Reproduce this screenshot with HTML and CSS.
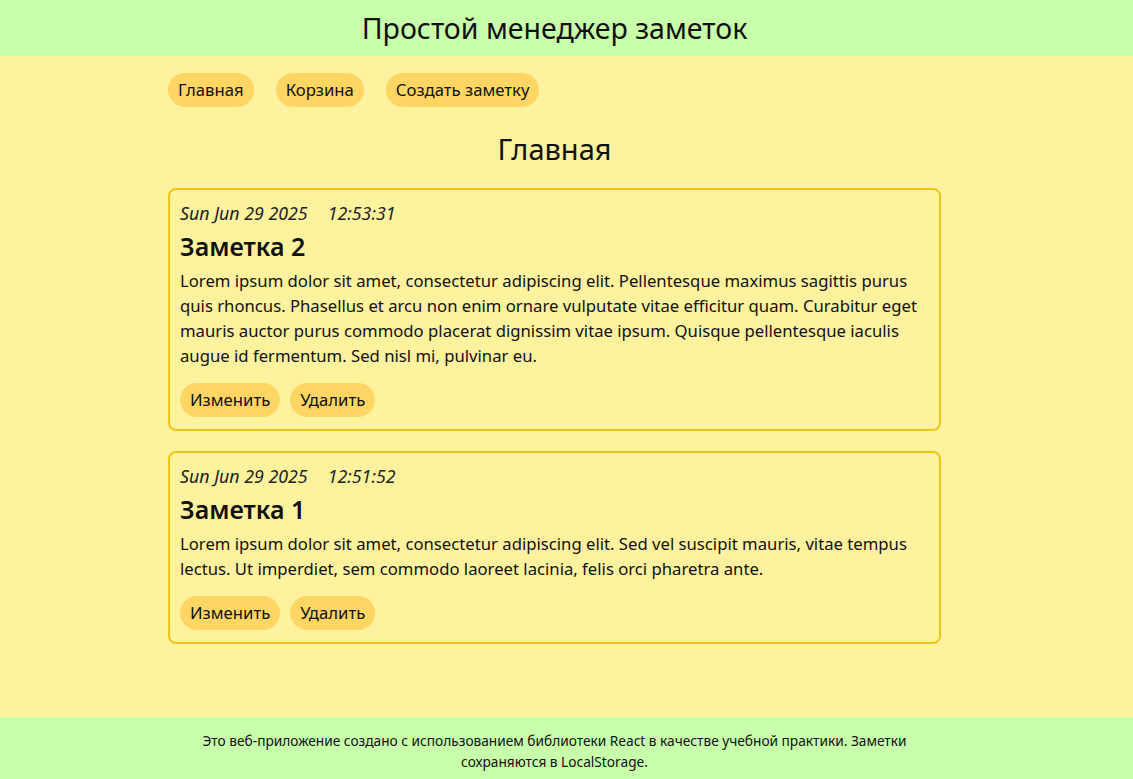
FILE: index.html
```html
<!DOCTYPE html>
<html lang="ru">
<head>
<meta charset="utf-8">
<title>Простой менеджер заметок</title>
<link rel="stylesheet" href="styles.css">
</head>
<body>
<div class="page">
  <header class="header">
    <h1 class="header-title">Простой менеджер заметок</h1>
  </header>
  <main class="main">
    <div class="wrap">
      <nav class="nav">
        <button class="pill">Главная</button>
        <button class="pill">Корзина</button>
        <button class="pill">Создать заметку</button>
      </nav>
      <h2 class="page-title">Главная</h2>
      <div class="notes">
        <article class="note">
          <div class="note-date"><span>Sun Jun 29 2025</span><span>12:53:31</span></div>
          <h3 class="note-title">Заметка 2</h3>
          <p class="note-text">Lorem ipsum dolor sit amet, consectetur adipiscing elit. Pellentesque maximus sagittis purus quis rhoncus. Phasellus et arcu non enim ornare vulputate vitae efficitur quam. Curabitur eget mauris auctor purus commodo placerat dignissim vitae ipsum. Quisque pellentesque iaculis augue id fermentum. Sed nisl mi, pulvinar eu.</p>
          <div class="note-actions">
            <button class="pill">Изменить</button>
            <button class="pill">Удалить</button>
          </div>
        </article>
        <article class="note">
          <div class="note-date"><span>Sun Jun 29 2025</span><span>12:51:52</span></div>
          <h3 class="note-title">Заметка 1</h3>
          <p class="note-text">Lorem ipsum dolor sit amet, consectetur adipiscing elit. Sed vel suscipit mauris, vitae tempus lectus. Ut imperdiet, sem commodo laoreet lacinia, felis orci pharetra ante.</p>
          <div class="note-actions">
            <button class="pill">Изменить</button>
            <button class="pill">Удалить</button>
          </div>
        </article>
      </div>
    </div>
  </main>
  <footer class="footer">
    <p class="footer-text">Это веб-приложение создано с использованием библиотеки React в качестве учебной практики. Заметки сохраняются в LocalStorage.</p>
  </footer>
</div>
</body>
</html>
```
FILE: styles.css
```css
* { box-sizing: border-box; }
html, body { margin: 0; padding: 0; }
body {
  font-family: "Noto Sans", "Open Sans", sans-serif;
  color: #111;
  background: #fff29e;
}
.page {
  min-height: 100vh;
  display: flex;
  flex-direction: column;
}
.header {
  background: #c8ffaa;
  height: 56px;
  display: flex;
  align-items: center;
  justify-content: center;
  padding-right: 24px;
}
.header-title {
  margin: 0;
  font-size: 28.5px;
  font-weight: 400;
  line-height: 56px;
}
.main {
  flex: 1;
  background: #fff29e;
  padding-right: 24px;
}
.wrap {
  width: 773px;
  margin: 0 auto;
  padding-top: 17px;
}
.nav {
  display: flex;
  gap: 22px;
}
.pill {
  font-family: inherit;
  font-size: 16.7px;
  color: #111;
  background: #ffd564;
  border: none;
  border-radius: 17px;
  height: 34px;
  padding: 0 10px;
  line-height: 34px;
  cursor: pointer;
}
.page-title {
  margin: 26px 0 0;
  text-align: center;
  font-size: 29px;
  font-weight: 400;
  line-height: 32px;
}
.notes {
  margin-top: 23px;
  display: flex;
  flex-direction: column;
  gap: 20px;
}
.note {
  border: 2px solid #f2c21a;
  border-radius: 8px;
  padding: 10px 10px 12px;
}
.note-date {
  display: flex;
  gap: 20px;
  font-style: italic;
  font-size: 17.8px;
  line-height: 26px;
  color: #222;
}
.note-title {
  margin: 4px 0 0;
  font-size: 25px;
  font-weight: 600;
  line-height: 32px;
}
.note-text {
  margin: 6px 0 0;
  font-size: 16.7px;
  line-height: 25px;
}
.note-actions {
  margin-top: 15px;
  display: flex;
  gap: 10px;
}
.footer {
  background: #c8ffaa;
  padding: 13px 24px 7px 0;
}
.footer-text {
  margin: 0 auto;
  max-width: 740px;
  text-align: center;
  font-size: 13.7px;
  line-height: 21px;
}
```
